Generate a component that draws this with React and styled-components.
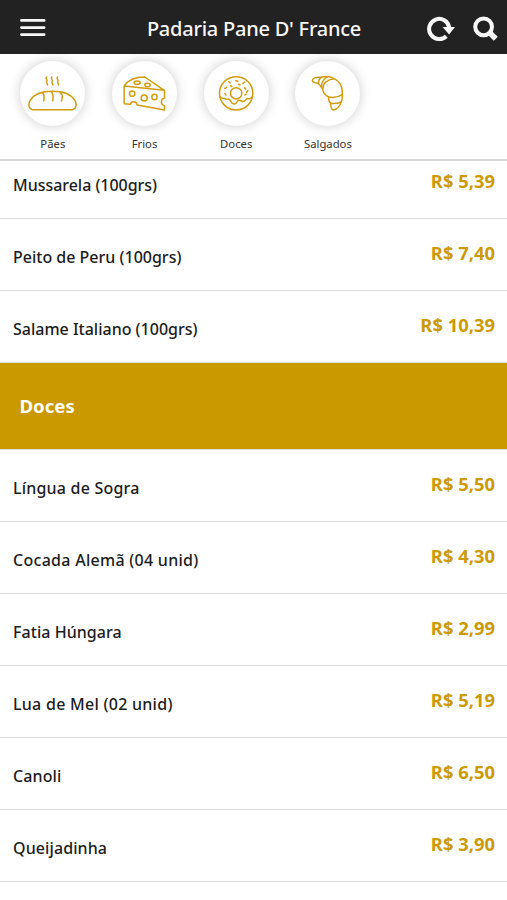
import React, { useState } from "react";
import styled, { createGlobalStyle } from "styled-components";

const GlobalStyle = createGlobalStyle`
  * {
    box-sizing: border-box;
  }

  body {
    margin: 0;
    background: #fff;
    font-family: "Noto Sans", "Open Sans", sans-serif;
  }
`;

const Page = styled.div`
  display: flex;
  flex-direction: column;
  height: 100vh;
  overflow: hidden;
  background: #fff;
`;

const Header = styled.header`
  display: grid;
  grid-template-columns: 1fr auto 1fr;
  align-items: center;
  flex: none;
  height: 54px;
  padding: 0 9px 0 20px;
  background: #222;
  color: #f7f7f7;
`;

const Title = styled.h1`
  margin: 0 10px 0 0;
  padding-top: 3px;
  font-size: 20px;
  line-height: 28px;
  font-weight: 500;
  letter-spacing: -0.23px;
  white-space: nowrap;
`;

const Actions = styled.div`
  display: flex;
  justify-content: flex-end;
  gap: 18px;
  padding-top: 3px;
`;

const IconButton = styled.button`
  display: flex;
  padding: 0;
  border: none;
  background: none;
  color: inherit;
  cursor: pointer;
`;

const Categories = styled.nav`
  display: flex;
  flex: none;
  height: 107px;
  padding: 7px 0 0 7px;
  background: #fff;
  border-bottom: 2px solid #d9d9d9;
  z-index: 1;
`;

const Category = styled.button`
  display: flex;
  flex-direction: column;
  align-items: center;
  width: 91.7px;
  padding: 0;
  border: none;
  background: none;
  font-family: inherit;
  cursor: pointer;
`;

const Circle = styled.span`
  display: flex;
  width: 65px;
  height: 65px;
  border-radius: 50%;
  background: #fff;
  box-shadow: 0 0 12px rgba(0, 0, 0, 0.2);
`;

const CategoryName = styled.span`
  margin-top: 10px;
  font-size: 11.3px;
  line-height: 16px;
  color: #333;
`;

const List = styled.main`
  flex: 1;
  min-height: 0;
  margin-top: -14px;
  overflow: hidden;
`;

const Product = styled.div`
  display: flex;
  justify-content: space-between;
  height: 72px;
  padding: 0 12px 0 13px;
  border-bottom: 1px solid #dedede;
`;

const ProductName = styled.span`
  padding-top: 26px;
  font-size: 16px;
  line-height: 24px;
  font-weight: 500;
  letter-spacing: ${(props) => props.$tracking || 0}px;
  color: #1c1c1c;
`;

const Price = styled.span`
  padding-top: 22px;
  font-size: 18.4px;
  line-height: 24px;
  font-weight: 700;
  color: #cb9a09;
`;

const SectionTitle = styled.h2`
  display: flex;
  align-items: center;
  height: 87px;
  margin: 0;
  padding-left: 19.5px;
  background: #ca9900;
  border-bottom: 1px solid #dedede;
  color: #fff;
  font-size: 18.6px;
  line-height: 24px;
  font-weight: 700;
`;

const LineArt = styled.svg`
  width: 65px;
  height: 65px;
  fill: none;
  stroke: #d29c10;
  stroke-width: 4.5;
  stroke-linecap: round;
  stroke-linejoin: round;
`;

const BreadIcon = () => (
  <LineArt viewBox="31.5 17 195 195">
    <path d="M68 163 C57 159 55 147 62 135 C72 119 91 108 129 108 C167 108 186 119 196 135 C203 147 201 159 190 163 Z" />
    <path d="M99 112 C106 118 104 124 103 137 M126 110 C133 117 131 124 130 137 M152 112 C161 118 159 125 156 137" />
    <path d="M111 65 c-5 5 4 8 1 13 c-2 4 2 7 2 11 M127 65 c-5 5 4 8 1 13 c-2 4 2 7 2 11 M144 65 c-5 5 4 8 1 13 c-2 4 2 7 2 11" />
  </LineArt>
);

const CheeseIcon = () => (
  <LineArt viewBox="36.5 17 195 195">
    <path d="M73 92 L193 105 L135 65 C110 65 86 72 73 92 V145 L92 147 C93 137 110 136 112 149 L194 164 V152 C181 148 182 131 194 128 V105" />
    <ellipse cx="112" cy="82" rx="9" ry="5" />
    <ellipse cx="143" cy="89" rx="8" ry="5" />
    <circle cx="97" cy="115" r="8" />
    <circle cx="133" cy="128" r="9" />
    <circle cx="164" cy="125" r="8" />
  </LineArt>
);

const DonutIcon = () => (
  <LineArt viewBox="41.5 17 195 195">
    <circle cx="138" cy="114" r="50" />
    <circle cx="138" cy="114" r="17" />
    <path d="M89 124 C95 132 99 126 104 130 C110 135 114 127 119 134 C122 139 123 145 132 146 C140 147 139 137 146 135 C153 134 154 141 161 138 C168 134 169 128 175 130 C181 131 184 129 187 123" />
    <path d="M116 79 l4 4 M137 76 l6 2 M158 84 l5 -4 M104 99 l5 -3 M121 91 l4 3 M145 87 l5 2 M163 97 l4 4 M173 106 l-4 5 M104 114 l3 5 M164 119 l4 -2" />
  </LineArt>
);

const CroissantIcon = () => (
  <LineArt viewBox="41 17 195 195">
    <path d="M110 84 C100 83 93 81 93 75 C94 68 107 65 121 65 C135 62 149 64 158 70 C173 76 184 92 183 112 C183 122 184 132 180 140 C176 152 166 163 155 164 C148 162 149 152 148 144 C143 138 140 132 142 125 C131 120 125 111 124 101 C120 96 116 88 110 84" />
    <path d="M121 65 C114 70 111 76 111 84" />
    <path d="M139 64 C129 69 121 78 120 94" />
    <path d="M158 70 C138 72 124 84 124 101" />
    <path d="M142 125 C156 128 172 125 183 118" />
    <path d="M148 144 C159 146 170 144 180 140" />
  </LineArt>
);

const MenuIcon = () => (
  <svg width="26" height="18" viewBox="0 0 26 18" stroke="currentColor" strokeWidth="2.6" strokeLinecap="round">
    <path d="M1.4 2.4 H24.2 M1.4 9.6 H24.2 M1.4 16.6 H24.2" />
  </svg>
);

const ReloadIcon = () => (
  <svg width="28" height="26" viewBox="0 0 28 26" fill="none">
    <path d="M19.3 20.2 A10.1 10.1 0 1 1 22.2 11.4" stroke="currentColor" strokeWidth="4" />
    <path d="M15.6 11 H28 L22.1 18.4 Z" fill="currentColor" />
  </svg>
);

const SearchIcon = () => (
  <svg width="25" height="26" viewBox="0 0 25 26" fill="none" stroke="currentColor">
    <circle cx="10.6" cy="10.8" r="8.4" strokeWidth="4" />
    <path d="M16.4 16.4 L22.8 22.8" strokeWidth="5.6" />
  </svg>
);

const categories = [
  { name: "Pães", Icon: BreadIcon },
  { name: "Frios", Icon: CheeseIcon },
  { name: "Doces", Icon: DonutIcon },
  { name: "Salgados", Icon: CroissantIcon },
];

const frios = [
  { name: "Mussarela (100grs)", price: 5.39, tracking: -0.03 },
  { name: "Peito de Peru (100grs)", price: 7.4 },
  { name: "Salame Italiano (100grs)", price: 10.39 },
];

const doces = [
  { name: "Língua de Sogra", price: 5.5, tracking: 0.2 },
  { name: "Cocada Alemã (04 unid)", price: 4.3, tracking: 0.28 },
  { name: "Fatia Húngara", price: 2.99, tracking: 0.05 },
  { name: "Lua de Mel (02 unid)", price: 5.19, tracking: 0.27 },
  { name: "Canoli", price: 6.5, tracking: 0.1 },
  { name: "Queijadinha", price: 3.9, tracking: 0.1 },
];

const formatPrice = (value) => `R$ ${value.toFixed(2).replace(".", ",")}`;

const ProductRow = ({ product }) => (
  <Product>
    <ProductName $tracking={product.tracking}>{product.name}</ProductName>
    <Price>{formatPrice(product.price)}</Price>
  </Product>
);

const App = () => {
  const [, setCategory] = useState("Frios");

  return (
    <>
      <GlobalStyle />
      <Page>
        <Header>
          <IconButton aria-label="Menu">
            <MenuIcon />
          </IconButton>
          <Title>Padaria Pane D' France</Title>
          <Actions>
            <IconButton aria-label="Atualizar">
              <ReloadIcon />
            </IconButton>
            <IconButton aria-label="Buscar">
              <SearchIcon />
            </IconButton>
          </Actions>
        </Header>

        <Categories>
          {categories.map(({ name, Icon }) => (
            <Category key={name} onClick={() => setCategory(name)}>
              <Circle>
                <Icon />
              </Circle>
              <CategoryName>{name}</CategoryName>
            </Category>
          ))}
        </Categories>

        <List>
          {frios.map((product) => (
            <ProductRow key={product.name} product={product} />
          ))}
          <SectionTitle>Doces</SectionTitle>
          {doces.map((product) => (
            <ProductRow key={product.name} product={product} />
          ))}
        </List>
      </Page>
    </>
  );
};

export default App;
